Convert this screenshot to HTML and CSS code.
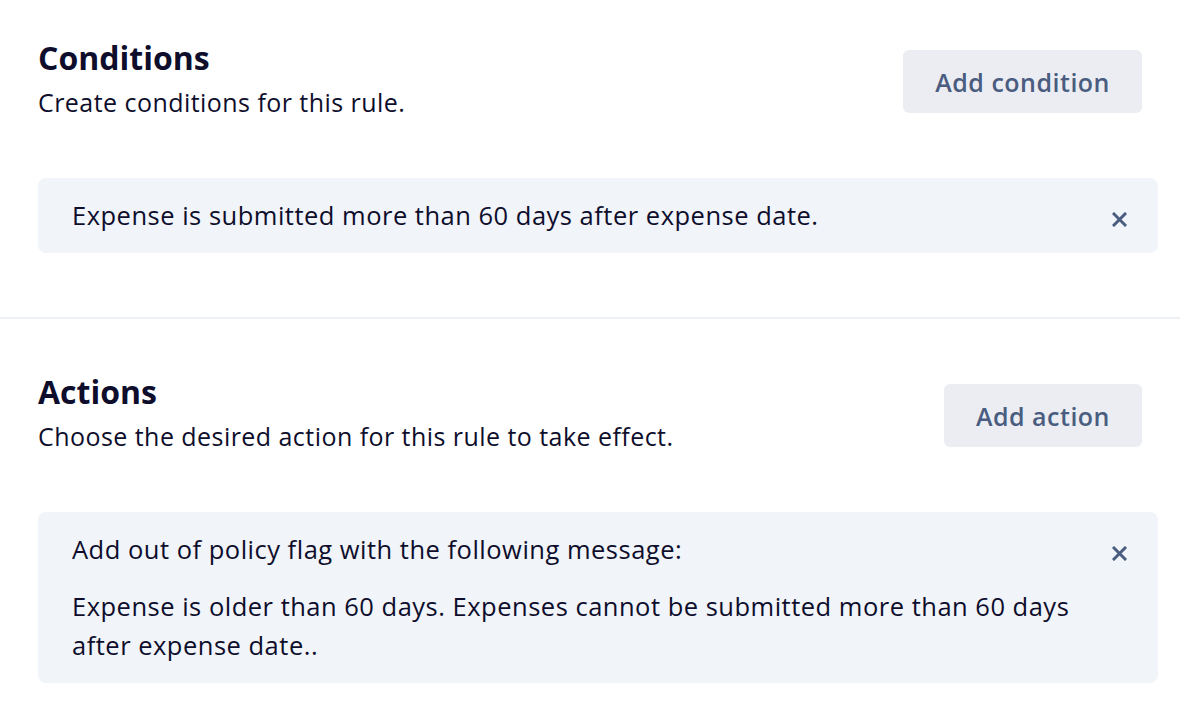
FILE: index.html
```html
<!DOCTYPE html>
<html lang="en">
<head>
<meta charset="utf-8">
<title>Rule</title>
<link rel="stylesheet" href="styles.css">
</head>
<body>
<main class="page">
  <section class="section section-first">
    <div class="section-header">
      <div class="heading">
        <h2 class="title">Conditions</h2>
        <p class="subtitle">Create conditions for this rule.</p>
      </div>
      <button class="add-btn" type="button">Add condition</button>
    </div>
    <div class="card">
      <div class="card-body">
        <p class="card-line">Expense is submitted more than 60 days after expense date.</p>
      </div>
      <button class="close-btn" type="button" aria-label="Remove">
        <svg viewBox="0 0 15 15" width="15" height="15"><path d="M2 2 L13 13 M13 2 L2 13" stroke="currentColor" stroke-width="3" stroke-linecap="square"/></svg>
      </button>
    </div>
  </section>
  <hr class="divider">
  <section class="section">
    <div class="section-header">
      <div class="heading">
        <h2 class="title">Actions</h2>
        <p class="subtitle">Choose the desired action for this rule to take effect.</p>
      </div>
      <button class="add-btn" type="button">Add action</button>
    </div>
    <div class="card">
      <div class="card-body">
        <p class="card-line">Add out of policy flag with the following message:</p>
        <p class="card-line card-message">Expense is older than 60 days. Expenses cannot be submitted more than 60 days after expense date..</p>
      </div>
      <button class="close-btn" type="button" aria-label="Remove">
        <svg viewBox="0 0 15 15" width="15" height="15"><path d="M2 2 L13 13 M13 2 L2 13" stroke="currentColor" stroke-width="3" stroke-linecap="square"/></svg>
      </button>
    </div>
  </section>
</main>
</body>
</html>
```
FILE: styles.css
```css
* { box-sizing: border-box; }
html, body { margin: 0; padding: 0; background: #ffffff; }
body {
  font-family: "Open Sans", "Liberation Sans", sans-serif;
  color: #0f0f2d;
}
.page { width: 1180px; }
.section { padding: 55px 22px 64px 38px; }
.section-first { padding-top: 40px; }
.section-header {
  display: flex;
  justify-content: space-between;
  align-items: flex-start;
  padding-right: 16px;
}
.heading { height: 73px; }
.title {
  margin: 0;
  font-size: 32px;
  line-height: 36px;
  font-weight: 700;
  color: #0e0e2c;
}
.subtitle {
  margin: 10px 0 0;
  font-size: 25px;
  line-height: 32px;
  letter-spacing: 0.45px;
  font-weight: 400;
  color: #0e0e2c;
}
.add-btn {
  margin-top: 10px;
  height: 63px;
  padding: 0 32px;
  border: 0;
  border-radius: 6px;
  background: #ecedf2;
  color: #4a5d80;
  font-family: inherit;
  font-size: 25px;
  letter-spacing: 0.5px;
  font-weight: 600;
  cursor: pointer;
}
.card {
  margin-top: 65px;
  display: flex;
  justify-content: space-between;
  align-items: flex-start;
  padding: 18px 31px 18px 34px;
  background: #f1f4f9;
  border-radius: 8px;
}
.card-body { flex: 1; }
.card-line {
  margin: 0;
  font-size: 25.5px;
  line-height: 39px;
  letter-spacing: 0.5px;
  color: #0e0e2c;
}
.card-message { margin-top: 18px; }
.close-btn {
  width: 15px;
  height: 31px;
  margin-top: 8px;
  margin-left: 20px;
  padding: 0;
  border: 0;
  background: transparent;
  color: #4a5d80;
  display: flex;
  align-items: center;
  justify-content: center;
  cursor: pointer;
}
.divider {
  margin: 0;
  border: 0;
  height: 2px;
  background: #eef1f6;
}
```
